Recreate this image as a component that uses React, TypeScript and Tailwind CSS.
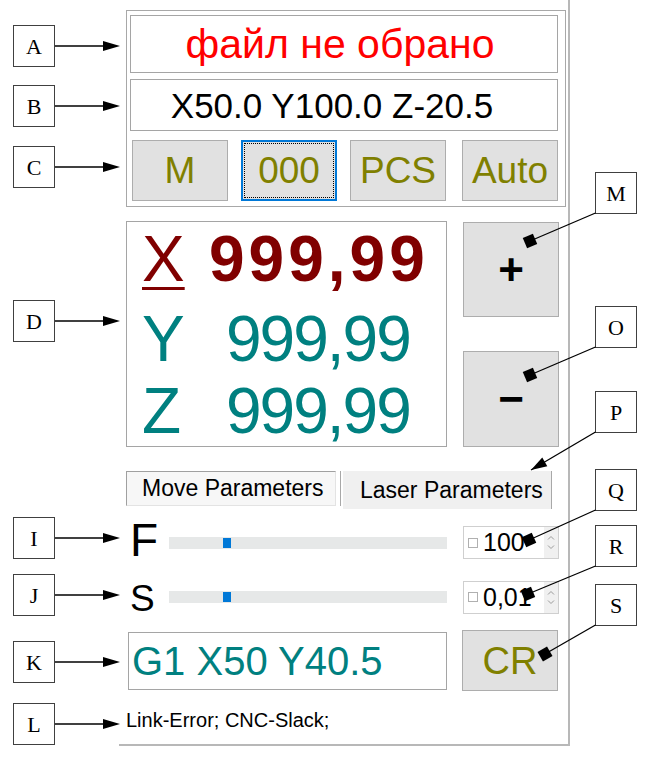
import React from 'react';

type Pt = [number, number];

const leftLabels = [
  { t: 'A', y: 25 },
  { t: 'B', y: 85 },
  { t: 'C', y: 146 },
  { t: 'D', y: 300 },
  { t: 'I', y: 517 },
  { t: 'J', y: 574 },
  { t: 'K', y: 641 },
  { t: 'L', y: 703 },
];

const rightLabels: { t: string; y: number; to: Pt; head: 'dot' | 'arrow' }[] = [
  { t: 'M', y: 172, to: [530, 241], head: 'dot' },
  { t: 'O', y: 306, to: [530, 375], head: 'dot' },
  { t: 'P', y: 391, to: [531, 470], head: 'arrow' },
  { t: 'Q', y: 469, to: [529, 540], head: 'dot' },
  { t: 'R', y: 525, to: [528, 594], head: 'dot' },
  { t: 'S', y: 584, to: [545, 654], head: 'dot' },
];

// marker polygon aligned with the leader line
function headPoints(from: Pt, to: Pt, kind: 'dot' | 'arrow') {
  const dx = to[0] - from[0];
  const dy = to[1] - from[1];
  const len = Math.hypot(dx, dy);
  const u = [dx / len, dy / len];
  const v = [-u[1], u[0]];
  const [cx, cy] = to;
  let pts: number[][];
  if (kind === 'arrow') {
    pts = [
      [cx, cy],
      [cx - 16 * u[0] + 5 * v[0], cy - 16 * u[1] + 5 * v[1]],
      [cx - 16 * u[0] - 5 * v[0], cy - 16 * u[1] - 5 * v[1]],
    ];
  } else {
    const s = 5.5;
    pts = [
      [cx + s * u[0] + s * v[0], cy + s * u[1] + s * v[1]],
      [cx + s * u[0] - s * v[0], cy + s * u[1] - s * v[1]],
      [cx - s * u[0] - s * v[0], cy - s * u[1] - s * v[1]],
      [cx - s * u[0] + s * v[0], cy - s * u[1] + s * v[1]],
    ];
  }
  return pts.map((p) => p.join(',')).join(' ');
}

function Chevrons() {
  return (
    <div className="w-[14px] self-stretch bg-[#f0f0f0] flex flex-col items-center justify-center gap-[5px]">
      <svg width="8" height="5" viewBox="0 0 8 5">
        <path d="M1 4.5 L4 1.5 L7 4.5" fill="none" stroke="#9a9a9a" strokeWidth="1" />
      </svg>
      <svg width="8" height="5" viewBox="0 0 8 5">
        <path d="M1 0.5 L4 3.5 L7 0.5" fill="none" stroke="#9a9a9a" strokeWidth="1" />
      </svg>
    </div>
  );
}

function SpinBox({ value }: { value: string }) {
  return (
    <div className="ml-[16px] w-[96px] h-[33px] border border-[#cfcfcf] bg-white flex items-center">
      <span className="ml-[4px] w-[10px] h-[10px] border border-[#b0b0b0] bg-white" />
      <span className="ml-[5px] flex-1 text-[25px] leading-none text-black">{value}</span>
      <Chevrons />
    </div>
  );
}

function Slider() {
  return (
    <div className="relative w-[278px] h-[12px] bg-[#e6e8e8]">
      <span className="absolute left-[54px] top-[1px] w-[8px] h-[10px] bg-[#0078d7]" />
    </div>
  );
}

const btn = 'h-[61px] w-[96px] bg-[#e1e1e1] border border-[#adadad] flex items-center justify-center text-[37px] leading-none text-[#808000]';

export default function App() {
  return (
    <div className="relative w-[648px] h-[758px] bg-white overflow-hidden font-['Liberation_Sans',Arial,sans-serif]">
      <div className="ml-[119px] w-[451px] h-[746px] border-r-2 border-b-2 border-[#b8b8b8] pt-[10px] pl-[7px]">
        {/* top group */}
        <div className="w-[440px] h-[197px] border border-[#a8a8a8] shadow-[inset_1px_1px_0_#fff] pt-[4px] pl-[3px]">
          <div className="w-[428px] h-[58px] bg-white border border-[#a5a5a5] flex items-center justify-center text-[41px] leading-none text-[#ff0000] pr-[8px]">
            файл не обрано
          </div>
          <div className="mt-[6px] w-[428px] h-[52px] bg-white border border-[#a5a5a5] flex items-center justify-center text-[35px] leading-none text-black pr-[24px]">
            X50.0 Y100.0 Z-20.5
          </div>
          <div className="mt-[9px] ml-[2px] flex">
            <div className={btn}>M</div>
            <div className={`${btn} ml-[13px] !border-2 !border-[#0078d7] outline-1 outline-dotted outline-black outline-offset-[-4px]`}>000</div>
            <div className={`${btn} ml-[13px]`}>PCS</div>
            <div className={`${btn} ml-[16px]`}>Auto</div>
          </div>
        </div>

        {/* position + jog */}
        <div className="mt-[14px] flex">
          <div className="w-[321px] h-[226px] bg-white border border-[#a5a5a5] pt-[5px] pl-[15px]">
            <div className="h-[80px] flex text-[64px] leading-none text-[#800000]">
              <span className="w-[67px] underline decoration-[3px] underline-offset-[6px]">X</span>
              <span className="font-bold tracking-[4px]">999,99</span>
            </div>
            <div className="h-[72px] flex text-[64px] leading-none text-[#008080]">
              <span className="w-[84px]">Y</span>
              <span className="tracking-[-2px]">999,99</span>
            </div>
            <div className="h-[64px] flex text-[64px] leading-none text-[#008080]">
              <span className="w-[84px]">Z</span>
              <span className="tracking-[-2px]">999,99</span>
            </div>
          </div>
          <div className="ml-[16px] flex flex-col justify-between">
            <div className="mt-[1px] w-[96px] h-[95px] bg-[#e1e1e1] border border-[#adadad] flex items-center justify-center text-[44px] font-bold leading-none text-black">
              +
            </div>
            <div className="w-[96px] h-[96px] bg-[#e1e1e1] border border-[#adadad] flex items-center justify-center text-[44px] font-bold leading-none text-black">
              −
            </div>
          </div>
        </div>

        {/* tabs */}
        <div className="mt-[24px] flex items-start">
          <div className="w-[210px] h-[35px] bg-[#f7f7f7] border-t border-l border-[#a0a0a0] border-r border-r-[#e3e3e3] border-b border-b-[#e3e3e3] flex items-center pl-[15px] text-[23px] leading-none text-black">
            Move Parameters
          </div>
          <div className="ml-[4px] w-px h-[35px] bg-[#a8a8a8]" />
          <div className="ml-[2px] w-[209px] h-[38px] bg-[#f0f0f0] border-r border-[#a8a8a8] flex items-center pl-[17px] text-[23px] leading-none text-black">
            Laser Parameters
          </div>
        </div>

        {/* F row */}
        <div className="mt-[17px] h-[33px] flex items-center">
          <span className="w-[43px] pl-[4px] -mt-[5px] text-[46px] leading-none text-black">F</span>
          <Slider />
          <SpinBox value="100" />
        </div>

        {/* S row */}
        <div className="mt-[22px] h-[32px] flex items-center">
          <span className="w-[43px] pl-[4px] mt-[3px] text-[37px] leading-none text-black">S</span>
          <Slider />
          <SpinBox value="0,01" />
        </div>

        {/* command row */}
        <div className="mt-[17px] flex items-center">
          <div className="ml-[2px] w-[319px] h-[58px] bg-white border border-[#a5a5a5] flex items-center pl-[3px] text-[40px] leading-none text-[#008080]">
            G1 X50 Y40.5
          </div>
          <div className="ml-[15px] w-[96px] h-[61px] bg-[#e1e1e1] border border-[#adadad] flex items-center justify-center text-[38px] leading-none text-[#808000]">
            CR
          </div>
        </div>

        <div className="mt-[19px] text-[20px] leading-none text-black">Link-Error; CNC-Slack;</div>
      </div>

      {/* annotation labels */}
      {leftLabels.map((l) => (
        <div
          key={l.t}
          className="absolute left-[13px] w-[42px] h-[42px] border border-[#404040] bg-white flex items-center justify-center font-['Liberation_Serif',serif] text-[22px] text-black"
          style={{ top: l.y }}
        >
          {l.t}
        </div>
      ))}
      {rightLabels.map((l) => (
        <div
          key={l.t}
          className="absolute left-[595px] w-[42px] h-[42px] border border-[#404040] bg-white flex items-center justify-center font-['Liberation_Serif',serif] text-[22px] text-black"
          style={{ top: l.y }}
        >
          {l.t}
        </div>
      ))}

      <svg className="absolute inset-0 pointer-events-none" width="648" height="758">
        {leftLabels.map((l) => {
          const y = l.y + 21;
          return (
            <g key={l.t}>
              <line x1="55" y1={y} x2="104" y2={y} stroke="black" strokeWidth="1.3" />
              <polygon points={`103,${y - 5} 120,${y} 103,${y + 5}`} fill="black" />
            </g>
          );
        })}
        {rightLabels.map((l) => {
          const from: Pt = [595.5, l.y + 41];
          return (
            <g key={l.t}>
              <line x1={from[0]} y1={from[1]} x2={l.to[0]} y2={l.to[1]} stroke="black" strokeWidth="1.3" />
              <polygon points={headPoints(from, l.to, l.head)} fill="black" />
            </g>
          );
        })}
      </svg>
    </div>
  );
}
